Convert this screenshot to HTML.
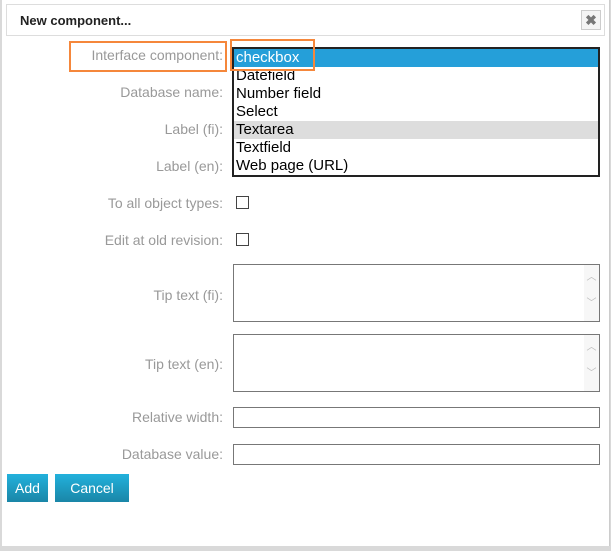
<!DOCTYPE html>
<html><head><style>
body{margin:0;width:611px;height:551px;background:#d9d9d9;position:relative;overflow:hidden;font-family:"Liberation Sans",sans-serif}
.frame{position:absolute;left:2px;top:0;width:607px;height:546px;background:#fff;border-right:1px solid #ccc}
.a{position:absolute}
.lbl{position:absolute;right:388px;font-size:14px;color:#999;white-space:nowrap}
.box{position:absolute;left:233px;width:365px;border:1px solid #777;background:#fff}
.cb{position:absolute;left:236px;width:11px;height:11px;border:1px solid #444;background:#fff}
.btn{position:absolute;top:474px;height:28px;background:linear-gradient(#22b1dc,#1a86a7);color:#fff;font-size:14px;line-height:28px;text-align:center}
.opt{position:absolute;left:0;right:0;height:18px;line-height:18px;font-size:15px;padding-left:2px;color:#000}
</style></head><body>
<div class="frame"></div>
<div class="a" style="left:6px;top:4px;width:597px;height:30px;border:1px solid #ddd;background:#fff"></div>
<div class="a" style="left:20px;top:13px;font-size:13px;font-weight:bold;color:#222">New component...</div>
<div class="a" style="left:581px;top:10px;width:18px;height:18px;border:1px solid #ccc;background:#f4f4f4;color:#777;font-size:14px;font-weight:bold;line-height:18px;text-align:center">✖</div>

<div class="a" style="left:69px;top:41px;width:154px;height:27px;border:2px solid #f5873b"></div>
<div class="lbl" style="top:47px">Interface component:</div>
<div class="lbl" style="top:84px">Database name:</div>
<div class="lbl" style="top:121px">Label (fi):</div>
<div class="lbl" style="top:158px">Label (en):</div>
<div class="lbl" style="top:195px">To all object types:</div>
<div class="lbl" style="top:232px">Edit at old revision:</div>
<div class="lbl" style="top:287px">Tip text (fi):</div>
<div class="lbl" style="top:356px">Tip text (en):</div>
<div class="lbl" style="top:409px">Relative width:</div>
<div class="lbl" style="top:446px">Database value:</div>

<div class="a" style="left:232px;top:47px;width:364px;height:126px;border:2px solid #222;background:#fff;overflow:hidden">
<div class="opt" style="top:0;background:#259fd9;color:#fff">checkbox</div>
<div class="opt" style="top:18px">Datefield</div>
<div class="opt" style="top:36px">Number field</div>
<div class="opt" style="top:54px">Select</div>
<div class="opt" style="top:72px;background:#ddd">Textarea</div>
<div class="opt" style="top:90px">Textfield</div>
<div class="opt" style="top:108px">Web page (URL)</div>
</div>
<div class="a" style="left:230px;top:39px;width:81px;height:28px;border:2px solid #f5873b"></div>

<div class="cb" style="top:196px"></div>
<div class="cb" style="top:233px"></div>
<div class="box" style="top:264px;height:56px"><div class="a" style="right:0;top:0;width:15px;height:56px;background:#f7f7f7;color:#bbb;font-size:10px;text-align:center;line-height:26px">︿<br>﹀</div></div>
<div class="box" style="top:334px;height:56px"><div class="a" style="right:0;top:0;width:15px;height:56px;background:#f7f7f7;color:#bbb;font-size:10px;text-align:center;line-height:26px">︿<br>﹀</div></div>
<div class="box" style="top:407px;height:19px"></div>
<div class="box" style="top:444px;height:19px"></div>

<div class="btn" style="left:7px;width:41px">Add</div>
<div class="btn" style="left:55px;width:55px;width:74px">Cancel</div>
</body></html>
